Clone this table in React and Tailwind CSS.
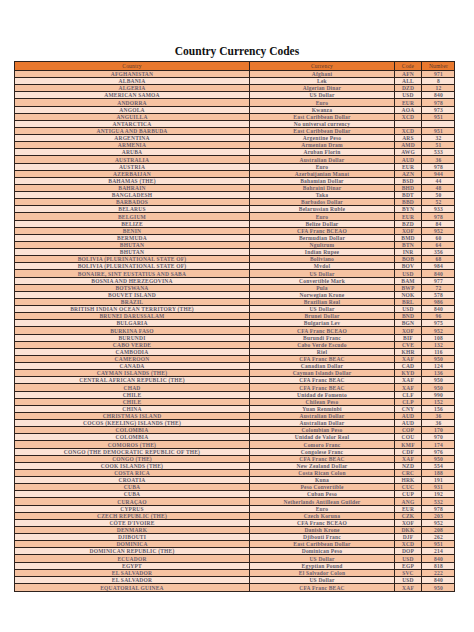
import React from 'react';

const rows = [
  ['AFGHANISTAN', 'Afghani', 'AFN', '971'],
  ['ALBANIA', 'Lek', 'ALL', '8'],
  ['ALGERIA', 'Algerian Dinar', 'DZD', '12'],
  ['AMERICAN SAMOA', 'US Dollar', 'USD', '840'],
  ['ANDORRA', 'Euro', 'EUR', '978'],
  ['ANGOLA', 'Kwanza', 'AOA', '973'],
  ['ANGUILLA', 'East Caribbean Dollar', 'XCD', '951'],
  ['ANTARCTICA', 'No universal currency', '', ''],
  ['ANTIGUA AND BARBUDA', 'East Caribbean Dollar', 'XCD', '951'],
  ['ARGENTINA', 'Argentine Peso', 'ARS', '32'],
  ['ARMENIA', 'Armenian Dram', 'AMD', '51'],
  ['ARUBA', 'Aruban Florin', 'AWG', '533'],
  ['AUSTRALIA', 'Australian Dollar', 'AUD', '36'],
  ['AUSTRIA', 'Euro', 'EUR', '978'],
  ['AZERBAIJAN', 'Azerbaijanian Manat', 'AZN', '944'],
  ['BAHAMAS (THE)', 'Bahamian Dollar', 'BSD', '44'],
  ['BAHRAIN', 'Bahraini Dinar', 'BHD', '48'],
  ['BANGLADESH', 'Taka', 'BDT', '50'],
  ['BARBADOS', 'Barbados Dollar', 'BBD', '52'],
  ['BELARUS', 'Belarussian Ruble', 'BYN', '933'],
  ['BELGIUM', 'Euro', 'EUR', '978'],
  ['BELIZE', 'Belize Dollar', 'BZD', '84'],
  ['BENIN', 'CFA Franc BCEAO', 'XOF', '952'],
  ['BERMUDA', 'Bermudian Dollar', 'BMD', '60'],
  ['BHUTAN', 'Ngultrum', 'BTN', '64'],
  ['BHUTAN', 'Indian Rupee', 'INR', '356'],
  ['BOLIVIA (PLURINATIONAL STATE OF)', 'Boliviano', 'BOB', '68'],
  ['BOLIVIA (PLURINATIONAL STATE OF)', 'Mvdol', 'BOV', '984'],
  ['BONAIRE, SINT EUSTATIUS AND SABA', 'US Dollar', 'USD', '840'],
  ['BOSNIA AND HERZEGOVINA', 'Convertible Mark', 'BAM', '977'],
  ['BOTSWANA', 'Pula', 'BWP', '72'],
  ['BOUVET ISLAND', 'Norwegian Krone', 'NOK', '578'],
  ['BRAZIL', 'Brazilian Real', 'BRL', '986'],
  ['BRITISH INDIAN OCEAN TERRITORY (THE)', 'US Dollar', 'USD', '840'],
  ['BRUNEI DARUSSALAM', 'Brunei Dollar', 'BND', '96'],
  ['BULGARIA', 'Bulgarian Lev', 'BGN', '975'],
  ['BURKINA FASO', 'CFA Franc BCEAO', 'XOF', '952'],
  ['BURUNDI', 'Burundi Franc', 'BIF', '108'],
  ['CABO VERDE', 'Cabo Verde Escudo', 'CVE', '132'],
  ['CAMBODIA', 'Riel', 'KHR', '116'],
  ['CAMEROON', 'CFA Franc BEAC', 'XAF', '950'],
  ['CANADA', 'Canadian Dollar', 'CAD', '124'],
  ['CAYMAN ISLANDS (THE)', 'Cayman Islands Dollar', 'KYD', '136'],
  ['CENTRAL AFRICAN REPUBLIC (THE)', 'CFA Franc BEAC', 'XAF', '950'],
  ['CHAD', 'CFA Franc BEAC', 'XAF', '950'],
  ['CHILE', 'Unidad de Fomento', 'CLF', '990'],
  ['CHILE', 'Chilean Peso', 'CLP', '152'],
  ['CHINA', 'Yuan Renminbi', 'CNY', '156'],
  ['CHRISTMAS ISLAND', 'Australian Dollar', 'AUD', '36'],
  ['COCOS (KEELING) ISLANDS (THE)', 'Australian Dollar', 'AUD', '36'],
  ['COLOMBIA', 'Colombian Peso', 'COP', '170'],
  ['COLOMBIA', 'Unidad de Valor Real', 'COU', '970'],
  ['COMOROS (THE)', 'Comoro Franc', 'KMF', '174'],
  ['CONGO (THE DEMOCRATIC REPUBLIC OF THE)', 'Congolese Franc', 'CDF', '976'],
  ['CONGO (THE)', 'CFA Franc BEAC', 'XAF', '950'],
  ['COOK ISLANDS (THE)', 'New Zealand Dollar', 'NZD', '554'],
  ['COSTA RICA', 'Costa Rican Colon', 'CRC', '188'],
  ['CROATIA', 'Kuna', 'HRK', '191'],
  ['CUBA', 'Peso Convertible', 'CUC', '931'],
  ['CUBA', 'Cuban Peso', 'CUP', '192'],
  ['CURAÇAO', 'Netherlands Antillean Guilder', 'ANG', '532'],
  ['CYPRUS', 'Euro', 'EUR', '978'],
  ['CZECH REPUBLIC (THE)', 'Czech Koruna', 'CZK', '203'],
  ["CÔTE D'IVOIRE", 'CFA Franc BCEAO', 'XOF', '952'],
  ['DENMARK', 'Danish Krone', 'DKK', '208'],
  ['DJIBOUTI', 'Djibouti Franc', 'DJF', '262'],
  ['DOMINICA', 'East Caribbean Dollar', 'XCD', '951'],
  ['DOMINICAN REPUBLIC (THE)', 'Dominican Peso', 'DOP', '214'],
  ['ECUADOR', 'US Dollar', 'USD', '840'],
  ['EGYPT', 'Egyptian Pound', 'EGP', '818'],
  ['EL SALVADOR', 'El Salvador Colon', 'SVC', '222'],
  ['EL SALVADOR', 'US Dollar', 'USD', '840'],
  ['EQUATORIAL GUINEA', 'CFA Franc BEAC', 'XAF', '950'],
];

const cols = 'grid grid-cols-[235px_145px_27px_33px]';
const cell = 'flex items-center justify-center whitespace-nowrap overflow-hidden border-r border-[#2e221d] last:border-r-0';

// integer row heights so the 1px rules stay crisp (520px over 73 rows)
const step = 520 / rows.length;
const rowHeight = i => Math.round((i + 1) * step) - Math.round(i * step);

export default function App() {
  return (
    <div className="w-[474px] h-[632px] bg-white overflow-hidden font-['Liberation_Serif',serif]">
      {/* title */}
      <h1 className="pt-[44px] h-[61px] text-center text-[11.5px] leading-[14px] font-bold text-[#111]">
        Country Currency Codes
      </h1>

      {/* table */}
      <div className="ml-[14px] w-[441px] border border-[#2e221d] text-[5.5px] leading-[6px] font-bold tracking-[0.2px]">
        <div className={`${cols} h-[9px] bg-[#e8782e] text-[#5a3a30] font-normal border-b border-[#2e221d]`}>
          <div className={cell}>Country</div>
          <div className={cell}>Currency</div>
          <div className={cell}>Code</div>
          <div className={cell}>Number</div>
        </div>
        {rows.map((r, i) => (
          <div
            key={i}
            style={{ height: rowHeight(i) }}
            className={`${cols} border-b border-[#2e221d] last:border-b-0 ${
              i % 2 === 0 ? 'bg-[#f6c3a2] text-[#6f6270]' : 'bg-[#fce3d5] text-[#65606e]'
            }`}
          >
            {r.map((c, j) => (
              <div key={j} className={cell}>
                {c}
              </div>
            ))}
          </div>
        ))}
      </div>
    </div>
  );
}
